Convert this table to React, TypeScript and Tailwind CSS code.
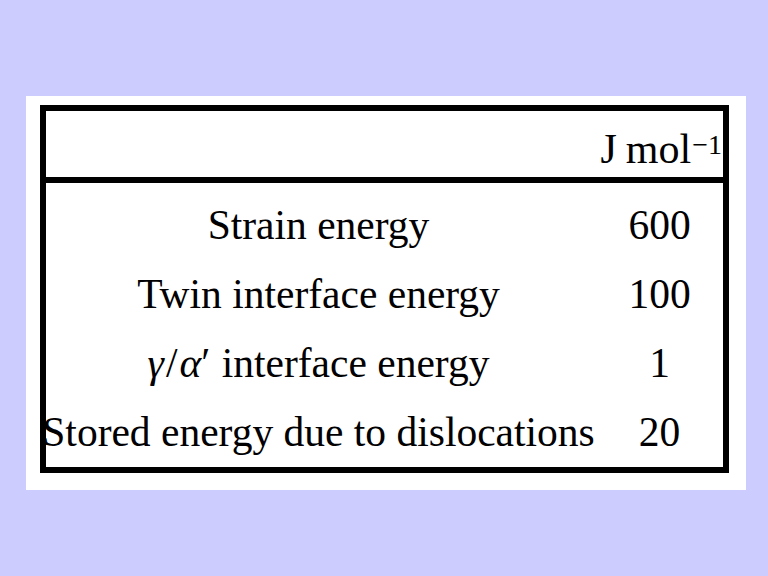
const ROWS: { label: React.ReactNode; value: string }[] = [
  { label: 'Strain energy', value: '600' },
  { label: 'Twin interface energy', value: '100' },
  {
    label: (
      <>
        <i>γ</i>
        <span className="mx-[2px]">/</span>
        <i>α</i>′<span className="inline-block w-[1px]" /> interface energy
      </>
    ),
    value: '1',
  },
  { label: 'Stored energy due to dislocations', value: '20' },
];

export default function App() {
  return (
    <div className="w-[768px] h-[576px] bg-[#ccccff] pt-[96px] pl-[26px] font-['Liberation_Serif',serif] text-black">
      <div className="w-[720px] h-[394px] bg-white pt-[9px] pl-[14px]">
        <div className="w-[689px] border-[6px] border-black">
          {/* header */}
          <div className="grid grid-cols-[550px_1fr] h-[72px] border-b-[6px] border-black">
            <div />
            <div className="flex items-end justify-end pb-[7px] pr-[1px] leading-none">
              <span className="text-[42px] whitespace-nowrap">J</span>
              <span className="ml-[9px] text-[42px] whitespace-nowrap">mol</span>
              <span className="mb-[11px] ml-[1px] text-[28px] whitespace-nowrap">−1</span>
            </div>
          </div>
          {/* rows */}
          <div className="flex flex-col pt-[8px]">
            {ROWS.map((r, i) => (
              <div key={i} className="grid grid-cols-[550px_1fr] h-[69px] items-center text-[41.5px] leading-none">
                <div className="text-center whitespace-nowrap -ml-[5px]">{r.label}</div>
                <div className="text-center">{r.value}</div>
              </div>
            ))}
          </div>
        </div>
      </div>
    </div>
  );
}
